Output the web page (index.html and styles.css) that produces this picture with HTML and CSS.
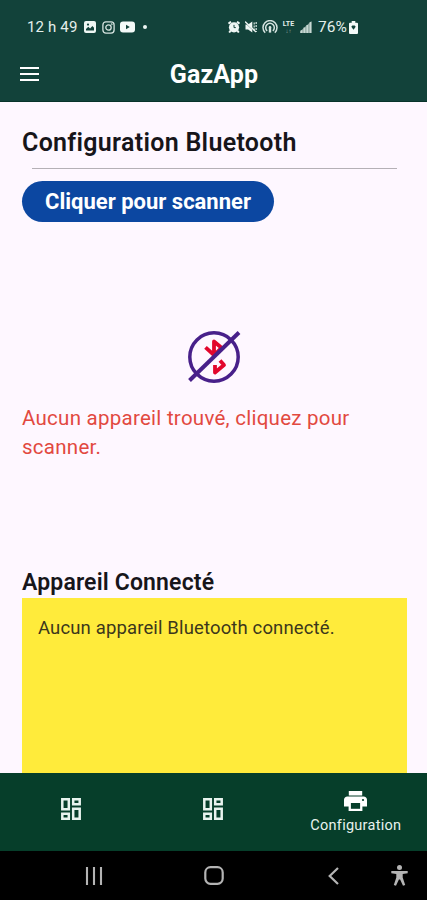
FILE: index.html
```html
<!DOCTYPE html>
<html lang="fr">
<head>
    <meta charset="UTF-8">
    <title>GazApp</title>
    <link rel="stylesheet" href="styles.css">
</head>
<body>
<div class="phone">
    <header class="header">
        <!--status bar-->
        <div class="status">
            <div class="status-left">
                <span class="time">12 h 49</span>
                <svg class="photo" width="12" height="12" viewBox="0 0 12 12">
                    <rect width="12" height="12" rx="2" fill="#eef6f3"/>
                    <path d="M2 9.6V8l2.3-2.2 1.8 1.6L8.4 5 10 6.7v2.9z" fill="#12423a"/>
                    <circle cx="4" cy="3.6" r="1.1" fill="#12423a"/>
                </svg>
                <svg class="insta" width="13" height="13" viewBox="0 0 13 13" fill="none" stroke="#d5e3df" stroke-width="1.3">
                    <rect x=".9" y=".9" width="11.2" height="11.2" rx="3"/>
                    <circle cx="6.5" cy="6.5" r="2.7"/>
                    <circle cx="9.7" cy="3.3" r=".3"/>
                </svg>
                <svg class="video" width="15" height="12" viewBox="0 0 15 12">
                    <rect y=".5" width="15" height="11" rx="3" fill="#f4faf8"/>
                    <path d="M6 3.7v4.6L9.8 6z" fill="#12423a"/>
                </svg>
                <span class="dot"></span>
            </div>
            <div class="status-right">
                <svg class="alarm" width="12" height="12" viewBox="0 0 12 12">
                    <path d="M.5 2.7L3 .7M11.5 2.7L9 .7M2.7 9.5l-1.5 2M9.3 9.5l1.5 2" stroke="#eef6f3" stroke-width="2"/>
                    <circle cx="6" cy="6.3" r="5.1" fill="#eef6f3"/>
                    <path d="M6 3.9v2.7h1.8" fill="none" stroke="#12423a" stroke-width="1"/>
                </svg>
                <svg class="mute" width="12" height="12" viewBox="0 0 12 12">
                    <path d="M.5 3.6h2.6L7.3.4v11.2L3.1 8.4H.5z" fill="#eef6f3"/>
                    <path d="M9.2 1.5v9M11.2 1v10" stroke="#c8d9d4" stroke-width="1.3" stroke-dasharray="2 1"/>
                    <path d="M.3 1.9l10.5 9.8" stroke="#12423a" stroke-width=".6"/>
                    <path d="M0 .5l11 10.5" stroke="#eef6f3" stroke-width="1.3"/>
                </svg>
                <svg class="hotspot" width="16" height="14" viewBox="0 0 16 14" fill="none" stroke="#d5e3df" stroke-width="1.5">
                    <path d="M3.2 12.7a7 7 0 1 1 9.6 0M5.2 10.9a4.3 4.3 0 1 1 5.6 0"/>
                    <path d="M8 7.6v5" stroke-width="2.4"/>
                    <circle cx="8" cy="7.4" r="1.3" fill="#d5e3df" stroke="none"/>
                </svg>
                <span class="lte">LTE<small>↓↑</small></span>
                <svg class="signal" width="12" height="12" viewBox="0 0 12 12">
                    <path d="M0 12V10.5L11.5 0V12z" fill="#8fa8a2"/>
                    <path d="M1.5 12V9.2M4.4 12V6.6M7.3 12V4M10.5 12V1" stroke="#c8d9d4" stroke-width="1.7"/>
                </svg>
                <span class="percent">76%</span>
                <svg class="battery" width="9" height="13" viewBox="0 0 9 13">
                    <path d="M2.7 0h3.6v1.8H8q1 0 1 1V12q0 1-1 1H1q-1 0-1-1V2.8q0-1 1-1h1.7z" fill="#f4faf8"/>
                    <path d="M4.5 8.8L2.3 5.8l1-1.3h2.4l1 1.3z" fill="#12423a"/>
                </svg>
            </div>
        </div>
        <div class="bar">
            <div class="burger"><span></span><span></span><span></span></div>
            <h1>GazApp</h1>
        </div>
    </header>
    <main class="content">
        <h2 class="title">Configuration Bluetooth</h2>
        <hr class="line">
        <button class="scan">Cliquer pour scanner</button>
        <div class="empty">
            <svg class="no-bluetooth" width="54" height="54" viewBox="0 0 54 54" fill="none">
                <circle cx="27" cy="27" r="24.2" stroke="#48208a" stroke-width="3.5"/>
                <path d="M18.5 17.3l8.500 7.700V11.500l7.500 6.300-5 5M33 30.500l4 4.500-9 7.500v-7.500" stroke="#e2062c" stroke-width="3.8" stroke-linejoin="round"/>
                <path d="M2.5 50.5L52 2.5" stroke="#48208a" stroke-width="4"/>
            </svg>
            <p>Aucun appareil trouvé, cliquez pour scanner.</p>
        </div>
        <h3 class="subtitle">Appareil Connecté</h3>
        <div class="connected">Aucun appareil Bluetooth connecté.</div>
    </main>
    <nav class="tabs">
        <a class="tab">
            <svg width="20" height="22" viewBox="0 0 20 22" fill="none" stroke="#e8f3ee" stroke-width="2.5">
                <path d="M1.3 1.3h6.5v10H1.3zM12.2 1.3h6.5v5h-6.5zM12.2 10.7h6.5v10h-6.5zM1.3 15.7h6.5v5H1.3z"/>
            </svg>
        </a>
        <a class="tab">
            <svg width="20" height="22" viewBox="0 0 20 22" fill="none" stroke="#e8f3ee" stroke-width="2.5">
                <path d="M1.3 1.3h6.5v10H1.3zM12.2 1.3h6.5v5h-6.5zM12.2 10.7h6.5v10h-6.5zM1.3 15.7h6.5v5H1.3z"/>
            </svg>
        </a>
        <a class="tab current">
            <svg width="23" height="20" viewBox="0 0 23 20">
                <path d="M4.8 0h13.4v4.4H4.8zM3.4 5.5h16.2c2 0 3.4 1.4 3.4 3.3v6.6h-4.6V20H4.6v-4.6H0V8.8c0-1.9 1.4-3.3 3.4-3.3z" fill="#fff"/>
                <path d="M6.9 12h9.2v5.8H6.9z" fill="#063e2a"/>
                <circle cx="19" cy="9" r="1.1" fill="#063e2a"/>
            </svg>
            <span>Configuration</span>
        </a>
    </nav>
    <!--android keys-->
    <div class="keys">
        <svg class="recent" width="18" height="18" viewBox="0 0 18 18" stroke="#b4b4b4" stroke-width="2.1">
            <path d="M2 0v18M9 0v18M16 0v18"/>
        </svg>
        <svg class="home" width="20" height="19" viewBox="0 0 20 19" fill="none" stroke="#b4b4b4" stroke-width="2.2">
            <rect x="1.3" y="1.2" width="17.4" height="16.6" rx="5.2"/>
        </svg>
        <svg class="back" width="11" height="18" viewBox="0 0 11 18" fill="none" stroke="#b4b4b4" stroke-width="2.2">
            <path d="M10 1L1.7 9l8.3 8"/>
        </svg>
        <svg class="access" width="17" height="21" viewBox="0 0 17 21" fill="#b4b4b4">
            <circle cx="8.5" cy="2.6" r="2.5"/>
            <path d="M.3 6h16.4v2.3l-5 .8v3.4l2.5 7.5-2.2.8-2.9-6.3H7.900L5 20.800l-2.200-.8 2.500-7.500V9.100l-5-.8z"/>
        </svg>
    </div>
</div>
</body>
</html>
```
FILE: styles.css
```css
* {
    margin: 0;
    padding: 0;
    box-sizing: border-box;
}

body {
    font-family: Roboto, "Liberation Sans", sans-serif;
    background-color: #fef7ff;
}

svg {
    display: block;
    flex: none;
}

.phone {
    width: 427px;
    height: 900px;
    display: flex;
    flex-direction: column;
    overflow: hidden;
}

.header {
    height: 102px;
    background-color: #12423a;
    border-bottom: 1px solid #08332a;
    color: #fff;
}

.status {
    height: 54px;
    padding: 0 69px 0 27px;
    display: flex;
    justify-content: space-between;
    align-items: center;
}

.status-left,
.status-right {
    display: flex;
    align-items: center;
    color: #e4efeb;
    font-size: 15px;
    letter-spacing: 0.15px;
}

.time {
    width: 57px;
    white-space: nowrap;
}

.insta {
    margin-left: 6px;
}

.video {
    margin-left: 5px;
}

.dot {
    width: 4px;
    height: 4px;
    margin-left: 8px;
    border-radius: 50%;
    background-color: #eef6f3;
}

.mute,
.hotspot {
    margin-left: 5px;
}

.lte {
    width: 13px;
    margin-left: 4px;
    font-size: 7px;
    font-weight: bold;
    line-height: 7px;
    letter-spacing: 0;
    text-align: center;
}

.lte small {
    display: block;
    font-size: 6px;
    line-height: 6px;
    opacity: 0.5;
}

.signal {
    margin-left: 5px;
}

.percent {
    width: 31px;
    margin-left: 6px;
    font-size: 15.5px;
    letter-spacing: 0;
    white-space: nowrap;
}

.bar {
    height: 40px;
    padding-left: 20px;
    display: flex;
    align-items: center;
}

.burger {
    width: 19px;
    display: flex;
    flex-direction: column;
    gap: 4px;
}

.burger span {
    height: 2px;
    background-color: #fff;
}

.bar h1 {
    flex: 1;
    padding-right: 38px;
    font-size: 25px;
    font-weight: 700;
    letter-spacing: 0.1px;
    text-align: center;
}

.content {
    flex: 1;
    min-height: 0;
    padding: 25px 20px 0 22px;
    display: flex;
    flex-direction: column;
    align-items: flex-start;
}

.title {
    font-size: 25px;
    font-weight: 600;
    line-height: 32px;
    letter-spacing: 0.3px;
    color: #17151a;
    white-space: nowrap;
}

.line {
    width: 365px;
    height: 1px;
    margin: 9px 0 12px 10px;
    border: none;
    background-color: #b5b0b6;
}

.scan {
    width: 252px;
    height: 41px;
    border: none;
    border-radius: 21px;
    background-color: #0c47a1;
    color: #fff;
    font-family: inherit;
    font-size: 22px;
    font-weight: 700;
    white-space: nowrap;
}

.empty {
    width: 100%;
    height: 345px;
    padding-top: 108px;
}

.no-bluetooth {
    margin: 0 0 20px 165px;
}

.empty p {
    font-size: 20.5px;
    line-height: 29px;
    letter-spacing: 0.26px;
    color: #e2493f;
}

.subtitle {
    font-size: 23px;
    font-weight: 600;
    line-height: 32px;
    letter-spacing: 0.15px;
    color: #17151a;
    white-space: nowrap;
}

.connected {
    flex: 1;
    width: 385px;
    margin-top: -1px;
    padding: 16px;
    background-color: #ffeb3b;
    color: #3c371c;
    font-size: 18.5px;
    line-height: 28px;
    letter-spacing: 0.14px;
}

.tabs {
    height: 78px;
    display: grid;
    grid-template-columns: repeat(3, 1fr);
    background-color: #063e2a;
}

.tab {
    display: flex;
    flex-direction: column;
    align-items: center;
    padding-top: 25px;
}

.tab.current {
    padding-top: 18px;
    color: #e8f3ee;
    font-size: 14.5px;
    line-height: 20px;
    letter-spacing: 0.27px;
}

.tab.current span {
    margin-top: 5px;
}

.keys {
    height: 49px;
    padding-left: 85px;
    display: flex;
    align-items: center;
    background-color: #000;
}

.home {
    margin-left: 101px;
}

.back {
    margin-left: 104px;
}

.access {
    margin-left: 52px;
}
```
